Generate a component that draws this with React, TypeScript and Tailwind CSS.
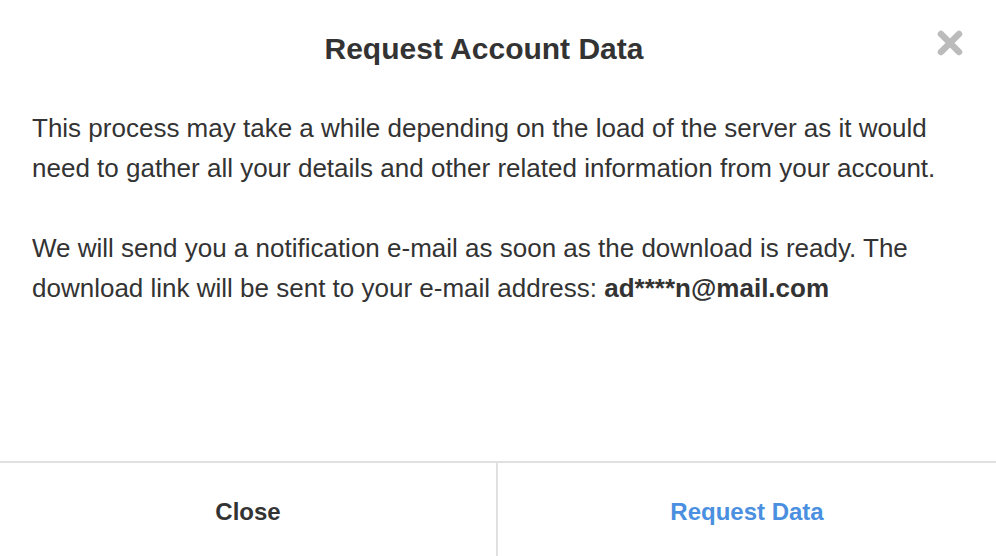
export default function App() {
  return (
    <div className="h-screen w-full bg-white flex flex-col text-[#333]" style={{ fontFamily: '"Liberation Sans", Arial, sans-serif' }}>
      {/* Header */}
      <div className="relative pt-[31px] px-8">
        <h1 className="text-center font-bold text-[30px] leading-[36px] pr-[28px]">Request Account Data</h1>
        <button className="absolute right-[33px] top-[30px] w-[26px] h-[26px]" aria-label="Close">
          <svg viewBox="0 0 26 26" className="w-[26px] h-[26px]">
            <path d="M4 4 L22 22 M22 4 L4 22" stroke="#bbbbbb" strokeWidth="6.5" strokeLinecap="round" fill="none" />
          </svg>
        </button>
      </div>

      {/* Body */}
      <div className="flex-1 px-8 pt-[41px] text-[26px] leading-[40px]">
        <p>
          This process may take a while depending on the load of the server as it would need to gather all your details and other related information from your account.
        </p>
        <p className="mt-10">
          We will send you a notification e-mail as soon as the download is ready. The download link will be sent to your e-mail address: <strong className="font-bold">ad****n@mail.com</strong>
        </p>
      </div>

      {/* Footer */}
      <div className="h-[95px] border-t-2 border-[#e0e0e0] grid grid-cols-2">
        <button className="border-r-2 border-[#e0e0e0] font-bold text-[24px] text-[#333] pt-1">Close</button>
        <button className="font-bold text-[24px] text-[#4a8fe0] pt-1">Request Data</button>
      </div>
    </div>
  );
}
